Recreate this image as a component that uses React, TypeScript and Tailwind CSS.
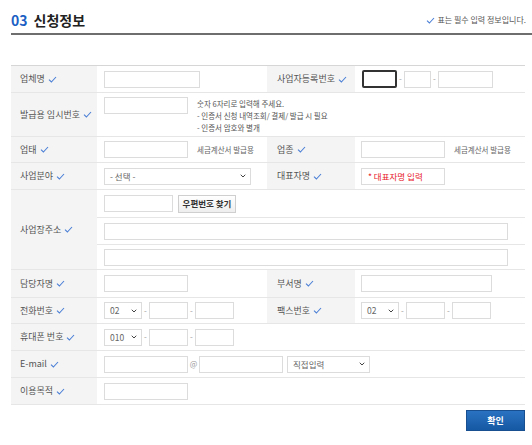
import { ChevronDown } from 'lucide-react'

const font = { fontFamily: '"Noto Sans CJK KR", "Noto Sans", sans-serif' }

function Check() {
  return (
    <svg width="9" height="7" viewBox="0 0 9 7" className="ml-[3px] inline-block">
      <path d="M1 3.6 L3.4 6 L8 1" fill="none" stroke="#4a7fd6" strokeWidth="1.1" />
    </svg>
  )
}

function Label({ text, wide }: { text: string; wide?: boolean }) {
  return (
    <td className={`bg-[#f4f4f4] align-middle text-[9px] text-[#555] ${wide ? 'pl-[10px]' : 'pl-[9px]'}`}>
      <span className="inline-flex items-center">
        {text}
        <Check />
      </span>
    </td>
  )
}

function Input({ w, className = '' }: { w: number; className?: string }) {
  return (
    <div
      className={`h-[17px] shrink-0 border border-[#dcdcdc] bg-white ${className}`}
      style={{ width: w }}
    />
  )
}

function Select({ w, text, className = '' }: { w: number; text: string; className?: string }) {
  return (
    <div
      className={`flex h-[17px] shrink-0 items-center justify-between border border-[#dcdcdc] bg-white pl-[5px] pr-[3px] text-[8.5px] text-[#666] ${className}`}
      style={{ width: w }}
    >
      <span>{text}</span>
      <ChevronDown size={8} strokeWidth={3} className="text-[#444]" />
    </div>
  )
}

function Dash() {
  return <span className="w-[7px] text-center text-[8px] text-[#999]">-</span>
}

function Phone({ code }: { code: string }) {
  return (
    <div className="flex items-center">
      <Select w={38} text={code} />
      <Dash />
      <Input w={39} />
      <Dash />
      <Input w={39} />
    </div>
  )
}

export default function App() {
  return (
    <div className="h-[445px] w-[532px] bg-white text-[#333]" style={font}>
      <div className="flex items-end justify-between pl-[11px] pr-[6px] pt-[13px] pb-[6px]">
        <h2 className="text-[14px] font-bold leading-none text-[#222]">
          <span className="mr-[6px] text-[#1c5fc4]">03</span>신청정보
        </h2>
        <span className="flex items-center pb-[3px] text-[8px] leading-none text-[#555]">
          <svg width="9" height="7" viewBox="0 0 9 7" className="mr-[2px]">
            <path d="M1 3.6 L3.4 6 L8 1" fill="none" stroke="#4a7fd6" strokeWidth="1.1" />
          </svg>
          표는 필수 입력 정보입니다.
        </span>
      </div>
      <div className="ml-[11px] h-[2px] bg-[#6e6e6e]" />

      <div className="pl-[11px] pr-[7px] pt-[30px]">
        <table className="w-full table-fixed border-collapse border-t border-b border-t-[#d6d6d6] border-b-[#cfcfcf]">
          <colgroup>
            <col className="w-[86px]" />
            <col className="w-[170px]" />
            <col className="w-[88px]" />
            <col className="w-[170px]" />
          </colgroup>
          <tbody className="[&>tr]:border-b [&>tr]:border-[#e6e6e6]">
            <tr className="h-[27px]">
              <Label text="업체명" />
              <td className="pl-[7px]">
                <Input w={96} />
              </td>
              <Label text="사업자등록번호" wide />
              <td className="pl-[7px]">
                <div className="flex items-center">
                  <div className="h-[18px] w-[35px] rounded-[2px] border-2 border-[#333]" />
                  <Dash />
                  <Input w={27} />
                  <Dash />
                  <Input w={55} />
                </div>
              </td>
            </tr>
            <tr className="h-[44px]">
              <Label text="발급용 임시번호" />
              <td colSpan={3} className="pl-[7px] align-top">
                <div className="flex items-start pt-[4px]">
                  <Input w={84} />
                  <div className="ml-[9px] text-[7.5px] leading-[12px] text-[#555]">
                    <p className="pt-[1px]">숫자 6자리로 입력해 주세요.</p>
                    <p>- 인증서 신청 내역조회/ 결제/ 발급 시 필요</p>
                    <p>- 인증서 암호와 별개</p>
                  </div>
                </div>
              </td>
            </tr>
            <tr className="h-[26px]">
              <Label text="업태" />
              <td className="pl-[7px]">
                <div className="flex items-center">
                  <Input w={84} />
                  <span className="ml-[9px] text-[7.5px] text-[#666]">세금계산서 발급용</span>
                </div>
              </td>
              <Label text="업종" wide />
              <td className="pl-[6px]">
                <div className="flex items-center">
                  <Input w={84} />
                  <span className="ml-[9px] text-[7.5px] text-[#666]">세금계산서 발급용</span>
                </div>
              </td>
            </tr>
            <tr className="h-[27px]">
              <Label text="사업분야" />
              <td className="pl-[7px]">
                <Select w={147} text="- 선택 -" />
              </td>
              <Label text="대표자명" wide />
              <td className="pl-[6px]">
                <div className="flex h-[17px] w-[84px] items-center border border-[#dcdcdc] pl-[6px] text-[8.5px] text-[#e8202a]">
                  * 대표자명 입력
                </div>
              </td>
            </tr>
            <tr>
              <Label text="사업장주소" />
              <td colSpan={3} className="pl-[7px] pr-[17px]">
                <div className="flex h-[27px] items-center">
                  <Input w={69} />
                  <button className="ml-[5px] h-[18px] w-[58px] border border-[#cfcfcf] bg-gradient-to-b from-white to-[#eeeeee] text-[8.5px] font-bold text-[#333]">
                    우편번호 찾기
                  </button>
                </div>
                <div className="-ml-[7px] -mr-[17px] h-px bg-[#e6e6e6]" />
                <div className="flex h-[26px] items-center">
                  <Input w={404} />
                </div>
                <div className="-ml-[7px] -mr-[17px] h-px bg-[#e6e6e6]" />
                <div className="flex h-[24px] items-center">
                  <Input w={404} />
                </div>
              </td>
            </tr>
            <tr className="h-[28px]">
              <Label text="담당자명" />
              <td className="pl-[7px]">
                <Input w={84} />
              </td>
              <Label text="부서명" wide />
              <td className="pl-[6px]">
                <Input w={131} />
              </td>
            </tr>
            <tr className="h-[26px]">
              <Label text="전화번호" />
              <td className="pl-[7px]">
                <Phone code="02" />
              </td>
              <Label text="팩스번호" wide />
              <td className="pl-[6px]">
                <Phone code="02" />
              </td>
            </tr>
            <tr className="h-[27px]">
              <Label text="휴대폰 번호" />
              <td colSpan={3} className="pl-[7px]">
                <Phone code="010" />
              </td>
            </tr>
            <tr className="h-[27px]">
              <Label text="E-mail" />
              <td colSpan={3} className="pl-[7px]">
                <div className="flex items-center">
                  <Input w={84} />
                  <span className="w-[11px] text-center text-[8px] text-[#999]">@</span>
                  <Input w={84} />
                  <Select w={83} text="직접입력" className="ml-[4px]" />
                </div>
              </td>
            </tr>
            <tr className="h-[27px]">
              <Label text="이용목적" />
              <td colSpan={3} className="pl-[7px]">
                <Input w={84} />
              </td>
            </tr>
          </tbody>
        </table>

        <div className="flex justify-end pt-[5px]">
          <button className="h-[21px] w-[59px] border border-[#174f90] bg-gradient-to-b from-[#2a73c2] to-[#1558a3] text-[9px] font-bold text-white">
            확인
          </button>
        </div>
      </div>
    </div>
  )
}
